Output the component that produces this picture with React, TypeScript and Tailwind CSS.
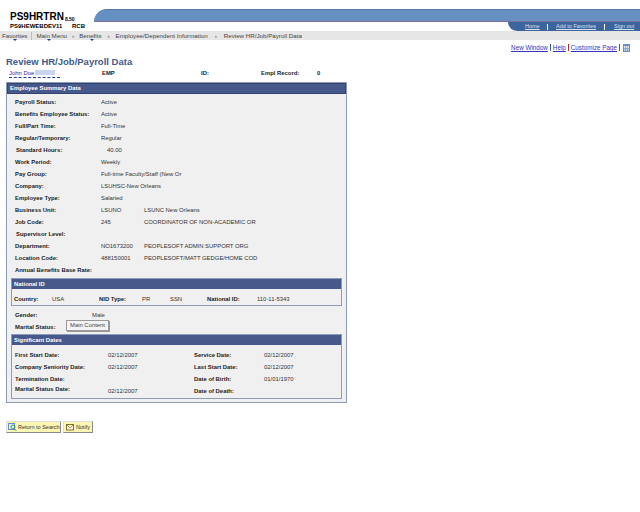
import React from "react";

const Row = ({ label, v1, v2, indent, vIndent }: { label: string; v1?: string; v2?: string; indent?: boolean; vIndent?: boolean }) => (
  <div className="flex h-[12px] items-center">
    <div className={"w-[86px] shrink-0 whitespace-nowrap font-bold text-[#222] " + (indent ? "pl-[1px]" : "")}>{label}</div>
    <div className={"w-[43px] shrink-0 whitespace-nowrap text-[#333] " + (vIndent ? "pl-[6px]" : "")}>{v1}</div>
    <div className="whitespace-nowrap text-[#333]">{v2}</div>
  </div>
);

const Crumb = ({ t, caret }: { t: string; caret?: boolean }) => (
  <span className="relative whitespace-nowrap">
    {t}
    {caret && <span className="absolute left-[11px] top-[8px] h-0 w-0 border-x-[2px] border-t-[2px] border-x-transparent border-t-[#1f3f8f]" />}
  </span>
);

const DateRow = ({ a, b, c, d, low }: { a: string; b?: string; c: string; d?: string; low?: boolean }) => (
  <div className="flex h-[12px] items-center">
    <div className={"w-[93px] shrink-0 whitespace-nowrap font-bold text-[#222] " + (low ? "-translate-y-[2px]" : "")}>{a}</div>
    <div className="w-[86px] shrink-0 text-[#333]">{b}</div>
    <div className="w-[70px] shrink-0 whitespace-nowrap font-bold text-[#222]">{c}</div>
    <div className="text-[#333]">{d}</div>
  </div>
);

export default function App() {
  return (
    <div className="h-[512px] w-[640px] overflow-hidden bg-white font-['Liberation_Sans',Arial,sans-serif] text-[5.9px] leading-[9px]">
      {/* header */}
      <div className="flex h-[31px] pt-[9px]">
        <div className="w-[94px] shrink-0 pl-[10px]">
          <div className="flex h-[13px] items-end pt-[1px]">
            <span className="text-[10px] font-bold leading-[11px] text-black">PS9HRTRN</span>
            <span className="ml-[1px] text-[5px] font-bold leading-[6px] text-black">8.50</span>
          </div>
          <div className="flex whitespace-nowrap text-[6px] font-bold leading-[8px] text-black">
            <span className="w-[62px]">PS9HEWEBDEV11</span>
            <span>RCB</span>
          </div>
        </div>
        <div className="flex flex-1 flex-col">
          <div className="h-[13px] rounded-tl-[14px] border-b border-t border-b-[#7b6f9b] border-t-[#5577aa] bg-[#6690c2]" />
          <div className="flex justify-end">
            <div className="flex h-[9px] w-[132px] items-center rounded-bl-[10px] bg-[#3c659e] pl-[17px] text-[5.5px] leading-[9px] text-[#d5e0f0] underline">
              <span className="w-[22px]">Home</span>
              <span className="mr-[8px] h-[6px] w-px bg-white" />
              <span className="w-[48px] whitespace-nowrap">Add to Favorites</span>
              <span className="mr-[9px] h-[6px] w-px bg-white" />
              <span className="whitespace-nowrap">Sign out</span>
            </div>
          </div>
        </div>
      </div>
      {/* nav */}
      <div className="flex h-[9px] items-center bg-[#e6e6e6] pl-[2px] text-[6.2px] leading-[9px] text-[#444]">
        <Crumb t="Favorites" caret />
        <span className="mx-[4px] h-[8px] w-px bg-[#bbb]" />
        <Crumb t="Main Menu" caret />
        <span className="mx-[5px]">›</span>
        <Crumb t="Benefits" caret />
        <span className="mx-[6px]">›</span>
        <Crumb t="Employee/Dependent Information" />
        <span className="mx-[7px]">›</span>
        <Crumb t="Review HR/Job/Payroll Data" />
      </div>
      {/* page links */}
      <div className="flex h-[14px] items-center justify-end pr-[10px] pt-[1px] text-[6.3px] text-[#3333bb] underline">
        <span>New Window</span>
        <span className="mx-[2px] h-[7px] w-px bg-[#3b5a94]" />
        <span>Help</span>
        <span className="mx-[2px] h-[7px] w-px bg-[#a33]" />
        <span>Customize Page</span>
        <span className="mx-[2px] h-[7px] w-px bg-[#3b5a94]" />
        <svg width="7" height="8" viewBox="0 0 7 8" className="ml-[1px]">
          <rect x="0.5" y="0.5" width="6" height="7" fill="#dfe8f4" stroke="#6b8fc0" />
          <rect x="0" y="0" width="7" height="2" fill="#6b8fc0" />
          <path d="M2.5 2v6M4.5 2v6M0 4.5h7M0 6h7" stroke="#6b8fc0" strokeWidth="0.6" />
        </svg>
      </div>
      {/* title */}
      <div className="flex h-[14px] items-center pl-[6px] pt-[1px]">
        <h1 className="text-[9.5px] font-bold leading-[12px] text-[#3f5a8c]">Review HR/Job/Payroll Data</h1>
      </div>
      {/* employee line */}
      <div className="flex h-[10px] items-center pl-[9px] text-[#222]">
        <div className="w-[93px] shrink-0">
          <span className="inline-block w-[51px] border-b border-dashed border-[#1f3f8f] leading-[8px] text-[#2a2aa8]">
            John Doe<span className="ml-px inline-block h-[5px] w-[20px] bg-[#c9d4ee] align-middle" />
          </span>
        </div>
        <div className="w-[99px] shrink-0 font-bold">EMP</div>
        <div className="w-[60px] shrink-0 font-bold">ID:</div>
        <div className="w-[56px] shrink-0 font-bold">Empl Record:</div>
        <div className="font-bold">0</div>
      </div>
      {/* panel */}
      <div className="ml-[6px] mt-[4px] w-[341px] border border-[#8b9bb8] bg-[#f0f0f0]">
        <div className="flex h-[11px] items-center border border-[#33436f] bg-[#47598a] pl-[2px] font-bold text-white">Employee Summary Data</div>
        <div className="pt-[2px]">
          <div className="pl-[8px]">
            <Row label="Payroll Status:" v1="Active" />
            <Row label="Benefits Employee Status:" v1="Active" />
            <Row label="Full/Part Time:" v1="Full-Time" />
            <Row label="Regular/Temporary:" v1="Regular" />
            <Row label="Standard Hours:" v1="40.00" indent vIndent />
            <Row label="Work Period:" v1="Weekly" />
            <Row label="Pay Group:" v1="Full-time Faculty/Staff (New Or" />
            <Row label="Company:" v1="LSUHSC-New Orleans" />
            <Row label="Employee Type:" v1="Salaried" />
            <Row label="Business Unit:" v1="LSUNO" v2="LSUNC New Orleans" />
            <Row label="Job Code:" v1="245" v2="COORDINATOR OF NON-ACADEMIC OR" />
            <Row label="Supervisor Level:" indent />
            <Row label="Department:" v1="NO1673200" v2="PEOPLESOFT ADMIN SUPPORT ORG" />
            <Row label="Location Code:" v1="488150001" v2="PEOPLESOFT/MATT GEDGE/HOME COD" />
            <Row label="Annual Benefits Base Rate:" />
          </div>
          <div className="mx-[4px] mt-[2px] h-[28px] border border-[#8b9bb8]">
            <div className="flex h-[10px] items-center bg-[#47598a] pl-[2px] font-bold text-white">National ID</div>
            <div className="flex h-[16px] items-center pl-[2px] pt-[4px] text-[#333]">
              <span className="w-[38px] font-bold text-[#222]">Country:</span>
              <span className="w-[47px]">USA</span>
              <span className="w-[43px] font-bold text-[#222]">NID Type:</span>
              <span className="w-[28px]">PR</span>
              <span className="w-[37px]">SSN</span>
              <span className="w-[50px] font-bold text-[#222]">National ID:</span>
              <span>110-11-5343</span>
            </div>
          </div>
          <div className="relative pl-[8px] pt-[3px]">
            <div className="flex h-[12px] items-center"><span className="w-[77px] font-bold text-[#222]">Gender:</span><span className="text-[#333]">Male</span></div>
            <div className="flex h-[12px] items-center"><span className="font-bold text-[#222]">Marital Status:</span></div>
            <div className="absolute left-[59px] top-[14px] flex h-[11px] w-[43px] items-center justify-center whitespace-nowrap border border-[#999] bg-[#f4f4f4] text-[#444] shadow-[1px_1px_0_#999]">Main Content</div>
          </div>
          <div className="mx-[4px] mb-[3px] mt-[1px] h-[65px] border border-[#8b9bb8]">
            <div className="flex h-[10px] items-center bg-[#47598a] pl-[2px] font-bold text-white">Significant Dates</div>
            <div className="pl-[3px] pt-[4px]">
              <DateRow a="First Start Date:" b="02/12/2007" c="Service Date:" d="02/12/2007" />
              <DateRow a="Company Seniority Date:" b="02/12/2007" c="Last Start Date:" d="02/12/2007" />
              <DateRow a="Termination Date:" c="Date of Birth:" d="01/01/1970" />
              <DateRow a="Marital Status Date:" b="02/12/2007" c="Date of Death:" low />
            </div>
          </div>
        </div>
      </div>
      {/* buttons */}
      <div className="ml-[6px] mt-[18px] flex gap-[2px]">
        <div className="flex h-[12px] w-[55px] items-center border border-b-[#888] border-r-[#888] border-l-[#ddd] border-t-[#ddd] bg-[#fbf6b4] pl-[1px] text-[5.5px] text-[#333]">
          <svg width="9" height="8" viewBox="0 0 9 8" className="shrink-0"><rect x="0.5" y="0.5" width="6" height="6" fill="#dfeaf5" stroke="#6b8fc0" /><circle cx="5" cy="4" r="2" fill="none" stroke="#3a6" /><path d="M6 5.5l2 2" stroke="#555" /></svg>
          <span className="ml-px whitespace-nowrap">Return to Search</span>
        </div>
        <div className="flex h-[12px] w-[30px] items-center border border-b-[#888] border-r-[#888] border-l-[#ddd] border-t-[#ddd] bg-[#fbf6b4] pl-[2px] text-[5.5px] text-[#333]">
          <svg width="9" height="7" viewBox="0 0 9 7" className="shrink-0"><rect x="0.5" y="0.5" width="7" height="5.5" fill="#fff6d8" stroke="#8a6d2a" /><path d="M1 1l3 3 3-3" stroke="#8a6d2a" fill="none" strokeWidth="0.7" /></svg>
          <span className="ml-px">Notify</span>
        </div>
      </div>
    </div>
  );
}
